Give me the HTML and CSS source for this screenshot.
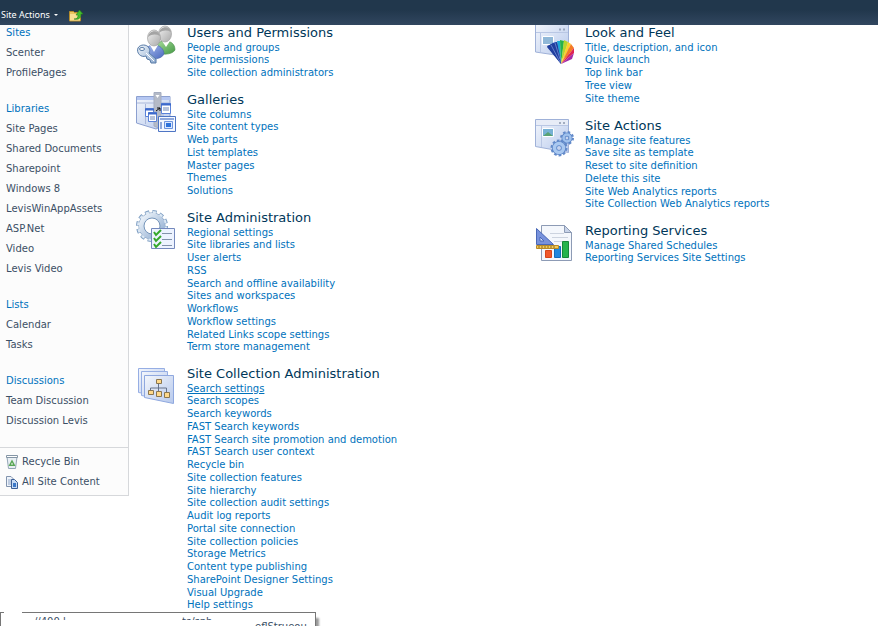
FILE: index.html
```html
<!DOCTYPE html>
<html lang="en">
<head>
<meta charset="utf-8">
<title>Site Settings</title>
<link rel="stylesheet" href="styles.css">
</head>
<body>
<svg class="defs" aria-hidden="true">
  <defs>
    <linearGradient id="win" x1="0" y1="0" x2="1" y2="1"><stop offset="0" stop-color="#f3f6fc"/><stop offset="1" stop-color="#b7c9ec"/></linearGradient>
    <linearGradient id="steel" x1="0" y1="0" x2="1" y2="1"><stop offset="0" stop-color="#eef4fa"/><stop offset="1" stop-color="#8facd0"/></linearGradient>
    <linearGradient id="head" x1="0" y1="0" x2="1" y2="1"><stop offset="0" stop-color="#f2f2f2"/><stop offset="1" stop-color="#a9a9a9"/></linearGradient>
    <linearGradient id="blue" x1="0" y1="0" x2="1" y2="1"><stop offset="0" stop-color="#a9bdf0"/><stop offset="1" stop-color="#4a68bd"/></linearGradient>
    <linearGradient id="green" x1="0" y1="0" x2="1" y2="1"><stop offset="0" stop-color="#a8dc9c"/><stop offset="1" stop-color="#459a45"/></linearGradient>
  </defs>
</svg>
<header class="ribbon">
  <button class="menu" type="button">Site Actions <span class="caret"></span></button>
  <button class="up" type="button" aria-label="Navigate up">
    <svg width="14" height="13" viewBox="0 0 14 13"><path d="M.5 2.500h4l1 1h6v8.500H.5z" fill="#e8c560" stroke="#b58c2c"/><path d="M1 5h10v6.500H1z" fill="#f7df94"/><path d="M5 10c3 0 4-1 4-4H7l3.500-5L14 5h-2c0 4-2 6-7 5z" fill="#43bd2e" stroke="#25851b" stroke-width=".6"/></svg>
  </button>
</header>
<div class="page">
  <nav class="side">
    <div class="groups">
      <ul><li><a class="top" href="#">Sites</a></li><li><a href="#">Scenter</a></li><li><a href="#">ProfilePages</a></li></ul>
      <ul><li><a class="top" href="#">Libraries</a></li><li><a href="#">Site Pages</a></li><li><a href="#">Shared Documents</a></li><li><a href="#">Sharepoint</a></li><li><a href="#">Windows 8</a></li><li><a href="#">LevisWinAppAssets</a></li><li><a href="#">ASP.Net</a></li><li><a href="#">Video</a></li><li><a href="#">Levis Video</a></li></ul>
      <ul><li><a class="top" href="#">Lists</a></li><li><a href="#">Calendar</a></li><li><a href="#">Tasks</a></li></ul>
      <ul><li><a class="top" href="#">Discussions</a></li><li><a href="#">Team Discussion</a></li><li><a href="#">Discussion Levis</a></li></ul>
    </div>
    <ul class="tools">
      <li><a href="#"><svg width="12" height="14" viewBox="0 0 12 14"><path d="M1 2l1.500 11.500h7L11 2z" fill="#e9eff4" stroke="#93a5b5"/><path d="M.5.5h11v2H.5z" fill="#fff" stroke="#8495a5"/><path d="M6 4.500l3.500 6.500h-7z" fill="#5aa757"/><path d="M6 7.500l1 2H5z" fill="#fff"/></svg>Recycle Bin</a></li>
      <li><a href="#"><svg width="12" height="13" viewBox="0 0 12 13"><path d="M.5.5H5L7.500 3v7.500h-7z" fill="#eef3fa" stroke="#8294ae"/><path d="M2 4h4M2 6h4M2 8h4" stroke="#8fa6c8"/><path d="M5.500 3.500h3l3 3v6h-6z" fill="#c6daf4" stroke="#3d5f96"/><path d="M7 7h3v4H7z" fill="#3c78c8"/></svg>All Site Content</a></li>
    </ul>
  </nav>
  <main class="settings">
    <div class="column">
      <section>
        <svg class="icon" viewBox="0 0 40 40">
          <path d="M20 25c0-8 5-9 9-9 6 0 10 3 10 9-3 5-15 6-19 0z" fill="url(#green)" stroke="#4b8d4b" stroke-width=".6"/><path d="M26 16l4 6 4-6z" fill="#fff"/><ellipse cx="29" cy="9" rx="6.500" ry="8" fill="url(#head)" stroke="#a2a2a2" stroke-width=".7"/><path d="M23 8c1-7 11-8 12-1-4-2-8-2-12 1z" fill="#a4a4a4"/>
          <path d="M10 31c-1-9 3-11 8-11 6 0 10 4 10 9-3 6-13 6-18 2z" fill="url(#blue)" stroke="#4865aa" stroke-width=".6"/><path d="M14 20l4 7 4-7z" fill="#fff"/><ellipse cx="18" cy="13" rx="6.500" ry="8" fill="url(#head)" stroke="#a2a2a2" stroke-width=".7"/><path d="M12 12c1-7 11-8 12-1-4-2-8-2-12 1z" fill="#a4a4a4"/>
          <path d="M2 23c2-4 9-4 11 0 1 2 1 3 0 5l7 6v4h-5l-1-3-3-1-1-3c-5 2-10-3-8-8z" fill="url(#steel)" stroke="#587ba6"/><ellipse cx="6" cy="24" rx="2.500" ry="1.500" fill="#fff" stroke="#587ba6"/><path d="M10 28l8 8" stroke="#fff"/>
        </svg>
        <div><h2>Users and Permissions</h2><ul><li><a href="#">People and groups</a></li><li><a href="#">Site permissions</a></li><li><a href="#">Site collection administrators</a></li></ul></div>
      </section>
      <section>
        <svg class="icon" viewBox="0 0 40 40">
          <path d="M.5 4.500H34V30l-14 7L.5 31z" fill="url(#win)" stroke="#8ca0d0"/><path d="M1 5h33v3H1z" fill="#b5c7f2"/><path d="M1 11h33M9.500 12v20M27 12v20" stroke="#aab8da"/>
          <path d="M18 .5h7V37l-7-3z" fill="#b4bac7" stroke="#a5adc0"/><path d="M19.500 3h4l-2 3z" fill="#fff"/>
          <path d="M9.500 16.500h8v8h-8z" fill="#fff" stroke="#5a82d8"/><path d="M9 17.500h9" stroke="#3c69cb" stroke-width="2"/><path d="M12.500 20.500h8v9h-8z" fill="#fff" stroke="#5a82d8"/><path d="M12 21.500h9" stroke="#3c69cb" stroke-width="2"/><path d="M14 25h5M14 27h5" stroke="#6e87b8"/>
          <path d="M25.500 11.500h9v10h-9z" fill="#fff" stroke="#5a82d8"/><path d="M25 12.500h10" stroke="#3c69cb" stroke-width="2"/><path d="M27 16h6M27 18h6" stroke="#6e87b8"/><path d="M20 19l4-3m-3 0h3v3" stroke="#111" fill="none"/>
          <path d="M22.500 24.500h17v15h-17z" fill="#f4f8ff" stroke="#4e75c4"/><path d="M24 27h14M25 30v7" stroke="#8fa8dc" stroke-width="2"/><path d="M28.500 29.500h8v7h-8z" fill="#dae8ff" stroke="#6d93dc"/><path d="M30 31h5v4h-5z" fill="#2d72db"/>
        </svg>
        <div><h2>Galleries</h2><ul><li><a href="#">Site columns</a></li><li><a href="#">Site content types</a></li><li><a href="#">Web parts</a></li><li><a href="#">List templates</a></li><li><a href="#">Master pages</a></li><li><a href="#">Themes</a></li><li><a href="#">Solutions</a></li></ul></div>
      </section>
      <section>
        <svg class="icon" viewBox="0 0 40 40">
          <circle cx="16" cy="16" r="13.500" fill="none" stroke="#7f9fc3" stroke-width="5" stroke-dasharray="4 3.070"/><circle cx="16" cy="16" r="10.500" fill="none" stroke="#7898bd" stroke-width="6"/><circle cx="16" cy="16" r="13.500" fill="none" stroke="#dce8f4" stroke-width="3" stroke-dasharray="3 4.070" stroke-dashoffset="-.5"/><circle cx="16" cy="16" r="10.500" fill="none" stroke="url(#steel)" stroke-width="5"/><circle cx="16" cy="16" r="8" fill="#fff" stroke="#7796bb"/>
          <path d="M15.500 18.500h23v20h-23z" fill="#edf3ff" stroke="#7489bd"/><path d="M26 23.500h10M26 29.500h10M26 35.500h10" stroke="#8292aa"/><path d="M18 22l2 3 5-5M18 28l2 3 5-5M18 34l2 3 5-5" fill="none" stroke="#35a82c" stroke-width="2"/>
        </svg>
        <div><h2>Site Administration</h2><ul><li><a href="#">Regional settings</a></li><li><a href="#">Site libraries and lists</a></li><li><a href="#">User alerts</a></li><li><a href="#">RSS</a></li><li><a href="#">Search and offline availability</a></li><li><a href="#">Sites and workspaces</a></li><li><a href="#">Workflows</a></li><li><a href="#">Workflow settings</a></li><li><a href="#">Related Links scope settings</a></li><li><a href="#">Term store management</a></li></ul></div>
      </section>
      <section>
        <svg class="icon" viewBox="0 0 40 40">
          <path d="M2.500 2.500h26v28l-26-4z" fill="url(#win)" stroke="#96aee4"/><path d="M5.500 5.500h26v29l-26-5z" fill="url(#win)" stroke="#96aee4"/><path d="M8.500 9.500h29v28l-29-6z" fill="url(#win)" stroke="#8fa8df"/>
          <path d="M22.500 17v8M14.500 25v-3h16v4" fill="none" stroke="#66738a"/><path d="M20.500 13.500h5v4h-5zM12.500 24.500h5v4h-5zM20.500 25.500h5v5h-5zM28.500 26.500h5v5h-5z" fill="#ffd98a" stroke="#8a7650"/>
        </svg>
        <div><h2>Site Collection Administration</h2><ul><li><a class="hover" href="#">Search settings</a></li><li><a href="#">Search scopes</a></li><li><a href="#">Search keywords</a></li><li><a href="#">FAST Search keywords</a></li><li><a href="#">FAST Search site promotion and demotion</a></li><li><a href="#">FAST Search user context</a></li><li><a href="#">Recycle bin</a></li><li><a href="#">Site collection features</a></li><li><a href="#">Site hierarchy</a></li><li><a href="#">Site collection audit settings</a></li><li><a href="#">Audit log reports</a></li><li><a href="#">Portal site connection</a></li><li><a href="#">Site collection policies</a></li><li><a href="#">Storage Metrics</a></li><li><a href="#">Content type publishing</a></li><li><a href="#">SharePoint Designer Settings</a></li><li><a href="#">Visual Upgrade</a></li><li><a href="#">Help settings</a></li></ul></div>
      </section>
    </div>
    <div class="column">
      <section>
        <svg class="icon" viewBox="0 0 40 40">
          <path d="M1.500-2h33v34l-33-5z" fill="url(#win)" stroke="#9fb1d8"/><path d="M2 7.500h32M6.500 8v19" stroke="#b9c7e4"/><path d="M25 4.500h2M29 4.500h2" stroke="#9aa6bd" stroke-width="2"/><path d="M8.500 11.500h11v8h-11z" fill="#90b8d8" stroke="#fff"/>
          <path d="M13 21l5-2 9 20z" fill="#15338f"/><path d="M18 18l5-1 4 22z" fill="#1c4fcb"/><path d="M23 16l3 0 1 23z" fill="#1ba8d6"/><path d="M26 15l4 1-3 23z" fill="#25b34a"/><path d="M30 15l4 2-7 22z" fill="#b6d52c"/><path d="M34 17l3 2-10 20z" fill="#ffd02a"/><path d="M37 19l3 4-13 16z" fill="#f47b25"/><path d="M40 23v5L27 39z" fill="#df2453"/><path d="M40 28l-2 6-11 5z" fill="#a32aa7"/><path d="M13 22l4-3 6-2 3 14 1 8z" fill="#203e9e"/><path d="M17 20l9 17M21 18l5 16" stroke="#8198df" stroke-width=".7"/>
        </svg>
        <div><h2>Look and Feel</h2><ul><li><a href="#">Title, description, and icon</a></li><li><a href="#">Quick launch</a></li><li><a href="#">Top link bar</a></li><li><a href="#">Tree view</a></li><li><a href="#">Site theme</a></li></ul></div>
      </section>
      <section>
        <svg class="icon" viewBox="0 0 40 40">
          <path d="M1.500 1.500h33v33l-33-6z" fill="url(#win)" stroke="#9fb1d8"/><path d="M2 2h32v5H2z" fill="#e7ecf7"/><path d="M2 7.500h32M7.500 8v21" stroke="#b9c7e4"/><path d="M25 5h2M29 5h2" stroke="#a2adc0" stroke-width="2"/><path d="M8.500 10.500h11v8h-11z" fill="#76b1d4" stroke="#fff"/><path d="M9 18l5-4 5 4z" fill="#59a273"/>
          <g fill="none"><circle cx="33" cy="20" r="5.500" stroke="#648bca" stroke-width="3" stroke-dasharray="2.300 2.020"/><circle cx="33" cy="20" r="3.500" stroke="#5a84c7" stroke-width="4"/><circle cx="33" cy="20" r="3.500" stroke="#9fc1ed" stroke-width="2.500"/><circle cx="25" cy="30" r="7" stroke="#648bca" stroke-width="3" stroke-dasharray="2.500 1.900"/><circle cx="25" cy="30" r="4.500" stroke="#5a84c7" stroke-width="5"/><circle cx="25" cy="30" r="4.500" stroke="#a9c8f0" stroke-width="3.500"/></g>
        </svg>
        <div><h2>Site Actions</h2><ul><li><a href="#">Manage site features</a></li><li><a href="#">Save site as template</a></li><li><a href="#">Reset to site definition</a></li><li><a href="#">Delete this site</a></li><li><a href="#">Site Web Analytics reports</a></li><li><a href="#">Site Collection Web Analytics reports</a></li></ul></div>
      </section>
      <section>
        <svg class="icon" viewBox="0 0 40 40">
          <path d="M7.500 2.500h23l7 7v28h-30z" fill="#f4f7fc" stroke="#8d9bb5"/><path d="M30.500 2.500v7h7z" fill="#c8d3e8" stroke="#8d9bb5"/><path d="M16 10.500h14M18 14.500h16M20 18.500h8" stroke="#ccd3df"/>
          <path d="M11.500 27.500h6v7h-6z" fill="#f0572c" stroke="#d64519"/><path d="M20.500 23.500h6v11h-6z" fill="#2086dd" stroke="#136bbc"/><path d="M28.500 18.500h6v16h-6z" fill="#26b34c" stroke="#178738"/>
          <path d="M2.500 5.500v16h17z" fill="#7892dc" stroke="#4968b8"/><path d="M6 14v4h4z" fill="#dce6ff" stroke="#4968b8"/><path d="M2.500 22.500h22v3h-22z" fill="#f4ca58" stroke="#b88a28"/><path d="M5 23v2M8 23v2M11 23v2M14 23v2M17 23v2M20 23v2" stroke="#8c6c1d"/>
        </svg>
        <div><h2>Reporting Services</h2><ul><li><a href="#">Manage Shared Schedules</a></li><li><a href="#">Reporting Services Site Settings</a></li></ul></div>
      </section>
    </div>
  </main>
</div>
<div class="status">
  <span>//400 l</span><span>ts/sph</span><span class="low">eflStrueou</span>
</div>
</body>
</html>
```

FILE: styles.css
```css
* { box-sizing: border-box; }
body { margin: 0; background: #fff; font: 10px/13px "DejaVu Sans", Verdana, sans-serif; color: #3b4f65; height: 100vh; overflow: hidden; }
ul { list-style: none; margin: 0; padding: 0; }
a { color: #0072bc; text-decoration: none; }
button { border: 0; padding: 0; background: none; color: #fff; font: 9px/14px "Noto Sans", sans-serif; }
svg { flex: none; }
.defs { position: absolute; width: 0; height: 0; }

.ribbon { display: flex; align-items: flex-end; gap: 11px; height: 25px; padding: 0 1px 3px; background: linear-gradient(#21374c, #21374c 40%, #31465f); }
.menu { display: flex; align-items: center; gap: 4px; }
.caret { border: 2px solid transparent; border-top-color: #fff; border-bottom: 0; }
.up svg { display: block; }

.page { display: flex; align-items: flex-start; }
.side { flex: none; width: 129px; background: #fcfcfc; border: solid #d6d8db; border-width: 0 1px 1px 0; }
.side ul { display: flex; flex-direction: column; gap: 4px; line-height: 16px; }
.side a { color: #3b4f65; }
.side .top { color: #0072bc; }
.groups { display: flex; flex-direction: column; gap: 20px; padding: 0 6px 18px; }
.side .tools { padding: 6px 6px 5px; border-top: 1px solid #d6d8db; }
.tools a { display: flex; align-items: center; gap: 4px; }

.settings { flex: 1; display: grid; grid-template-columns: 398px 1fr; padding-left: 7px; }
.column { display: flex; flex-direction: column; gap: 13px; }
section { display: flex; gap: 11px; }
section li:nth-child(4n + 2) { line-height: 12px; }
section a { display: block; }
section .hover { text-decoration: underline; }
.icon { width: 40px; height: 40px; }
h2 { margin: 0; color: #003759; font-size: 13px; line-height: 16px; font-weight: 400; }

.status { position: absolute; left: 0; bottom: 0; display: grid; grid-template-columns: 148px 73px 1fr; align-items: start; width: 316px; height: 14px; padding: 4px 4px 0 33px; background: #fff; border: 1px solid #767676; border-bottom: 0; box-shadow: 3px 6px 2px #999; line-height: 10px; }
.status::before { content: ""; position: absolute; top: -1px; left: 3px; width: 18px; height: 1px; background: #fff; }
.status span { height: 3px; overflow: hidden; }
.status .low { height: 9px; padding-top: 5px; }
```
